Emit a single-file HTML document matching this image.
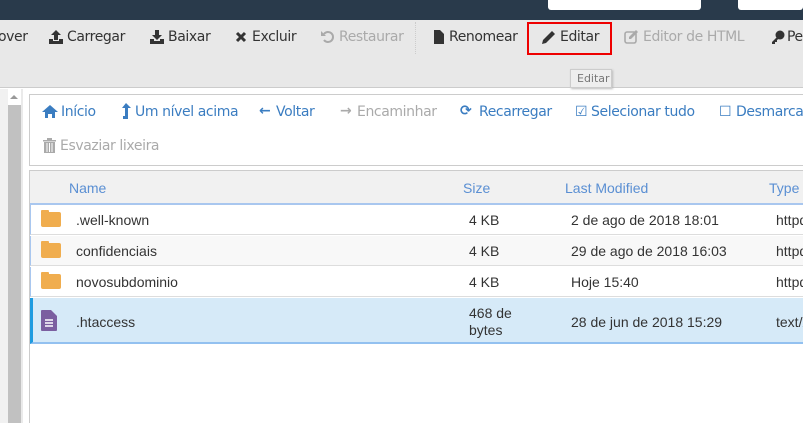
<!DOCTYPE html><html><head><style>
*{margin:0;padding:0;box-sizing:border-box}
body{width:803px;height:423px;overflow:hidden;background:#fff;font-family:"Liberation Sans",sans-serif;position:relative}
.a{position:absolute;white-space:nowrap}
.tb{font-family:"DejaVu Sans","Liberation Sans",sans-serif;font-size:14px;color:#333;letter-spacing:-0.4px}
.nv{font-family:"DejaVu Sans","Liberation Sans",sans-serif;font-size:14px;color:#3b7dc1;letter-spacing:-0.4px}
.g{color:#aaa}
.r{font-size:14px;color:#333}
.h{font-size:14px;color:#5a8fd3}
svg.a{overflow:visible}
</style></head><body>
<div class="a" style="left:0;top:0;width:803px;height:20px;background:#293a4b"></div>
<div class="a" style="left:548px;top:0;width:153px;height:10px;background:#fff;border-radius:0 0 3px 3px"></div>
<div class="a" style="left:738px;top:0;width:65px;height:10px;background:#fff;border-radius:0 0 3px 3px"></div>
<div class="a" style="left:0;top:20px;width:803px;height:68px;background:#e8e8e8;border-bottom:1px solid #ccc"></div>
<div class="a" style="left:415px;top:22px;height:32px;border-left:1px dotted #ccc"></div>
<div class="a tb" style="left:-2px;top:29px">over</div>
<svg class="a" style="left:49px;top:30px" width="14" height="14"><path d="M7 0L12 5H9V10H5V5H2Z M0 9H4V11H10V9H14V14H0Z" fill="#333"/></svg>
<div class="a tb" style="left:67px;top:29px">Carregar</div>
<svg class="a" style="left:150px;top:30px" width="14" height="14"><path d="M5 0H9V5H12L7 10L2 5H5Z M0 9H4V11H10V9H14V14H0Z" fill="#333"/></svg>
<div class="a tb" style="left:168px;top:29px">Baixar</div>
<svg class="a" style="left:236px;top:32px" width="10" height="10"><path d="M1 1L9 9M9 1L1 9" stroke="#333" stroke-width="3"/></svg>
<div class="a tb" style="left:252px;top:29px">Excluir</div>
<svg class="a" style="left:321px;top:30px" width="13" height="13"><path d="M3 4A5 5 0 1 1 3 10" stroke="#aaa" stroke-width="2" fill="none"/><path d="M0 1V6H5Z" fill="#aaa"/></svg>
<div class="a tb g" style="left:339px;top:29px">Restaurar</div>
<svg class="a" style="left:434px;top:30px" width="10" height="14"><path d="M0 0H6L10 4V14H0Z" fill="#333"/></svg>
<div class="a tb" style="left:449px;top:29px">Renomear</div>
<div class="a" style="left:527px;top:22px;width:85px;height:33px;border:2px solid #e00"></div>
<svg class="a" style="left:542px;top:30px" width="14" height="14"><path d="M10 1L13 4L4 13L0 14L1 10Z" fill="#333"/></svg>
<div class="a tb" style="left:560px;top:29px">Editar</div>
<svg class="a" style="left:624px;top:30px" width="15" height="14"><rect x="1" y="2" width="11" height="11" rx="2" fill="none" stroke="#aaa" stroke-width="1.6"/><path d="M12 0L14 2L7 9L5 9L5 7Z" fill="#aaa"/></svg>
<div class="a tb g" style="left:643px;top:29px">Editor de HTML</div>
<svg class="a" style="left:771px;top:30px" width="14" height="14"><circle cx="9" cy="5" r="4.5" fill="#333"/><path d="M7 6L1 12V14H4V12H6V10L9 8Z" fill="#333"/></svg>
<div class="a tb" style="left:787px;top:29px">Pe</div>
<div class="a" style="left:570px;top:69px;width:42px;height:19px;background:#eee;border:1px solid #ccc;box-shadow:1px 1px 2px #bbb;font-size:11px;color:#777;padding:2px 0 0 6px;font-family:'DejaVu Sans',sans-serif">Editar</div>
<div class="a" style="left:0;top:89px;width:8px;height:334px;background:#f1f1f1"></div>
<div class="a" style="left:8px;top:105px;width:13px;height:318px;background:#c1c1c1"></div>
<div class="a" style="left:10px;top:95px;width:0;height:0;border:4px solid transparent;border-bottom:4px solid #999;border-top:0"></div>
<div class="a" style="left:21px;top:89px;width:2px;height:334px;background:#eaeaea"></div>
<div class="a" style="left:29px;top:94px;width:780px;height:72px;border:1px solid #ccc"></div>
<svg class="a" style="left:42px;top:105px" width="16" height="13"><path d="M8 0L16 7H13V13H10V9H6V13H3V7H0Z" fill="#3b7dc1"/></svg>
<div class="a nv" style="left:61px;top:104px">Início</div>
<svg class="a" style="left:121px;top:103px" width="10" height="16"><path d="M5 0L10 5H7V16H2V13H4V5H1Z" fill="#3b7dc1"/></svg>
<div class="a nv" style="left:135px;top:104px">Um nível acima</div>
<div class="a nv" style="left:259px;top:103px;font-weight:bold">←</div>
<div class="a nv" style="left:276px;top:104px">Voltar</div>
<div class="a nv g" style="left:340px;top:103px;font-weight:bold">→</div>
<div class="a nv g" style="left:357px;top:104px">Encaminhar</div>
<div class="a nv" style="left:460px;top:103px;font-weight:bold">⟳</div>
<div class="a nv" style="left:479px;top:104px">Recarregar</div>
<div class="a nv" style="left:575px;top:104px">☑</div>
<div class="a nv" style="left:591px;top:104px">Selecionar tudo</div>
<div class="a nv" style="left:719px;top:104px">☐</div>
<div class="a nv" style="left:736px;top:104px">Desmarcar</div>
<svg class="a" style="left:43px;top:138px" width="13" height="15"><path d="M0 2H13V3.5H0Z M4 0H9V2H4Z M1 4H12V15H1Z" fill="#aaa"/><path d="M4 5V14M6.5 5V14M9 5V14" stroke="#fff" stroke-width="1"/></svg>
<div class="a nv g" style="left:60px;top:138px">Esvaziar lixeira</div>
<div class="a" style="left:29px;top:170px;width:780px;height:253px;border-left:1px solid #ccc;border-top:1px solid #ccc"></div>
<div class="a" style="left:30px;top:171px;width:773px;height:34px;background:#f1f1f1;border-bottom:2px solid #a9c7ef"></div>
<div class="a h" style="left:69px;top:180px">Name</div>
<div class="a h" style="left:463px;top:180px">Size</div>
<div class="a h" style="left:565px;top:180px">Last Modified</div>
<div class="a h" style="left:769px;top:180px">Type</div>
<div class="a" style="left:30px;top:205px;width:773px;height:30px;background:#fff;border-bottom:1px solid #ddd;border-left:1px solid #a9c7ef"></div>
<div class="a" style="left:30px;top:236px;width:773px;height:30px;background:#f8f8f8;border-bottom:1px solid #ddd;border-left:1px solid #a9c7ef"></div>
<div class="a" style="left:30px;top:267px;width:773px;height:30px;background:#fff;border-bottom:1px solid #ddd;border-left:1px solid #a9c7ef"></div>
<div class="a" style="left:30px;top:298px;width:773px;height:46px;background:#d6eaf8;border-bottom:2px solid #93c1f0;border-left:3px solid #1e9be0"></div>
<div class="a" style="left:41px;top:212px;width:20px;height:15px;background:#f0ad4e;border-radius:2px"></div><div class="a" style="left:41px;top:210px;width:8px;height:4px;background:#f0ad4e;border-radius:1px"></div>
<div class="a" style="left:41px;top:243px;width:20px;height:15px;background:#f0ad4e;border-radius:2px"></div><div class="a" style="left:41px;top:241px;width:8px;height:4px;background:#f0ad4e;border-radius:1px"></div>
<div class="a" style="left:41px;top:274px;width:20px;height:15px;background:#f0ad4e;border-radius:2px"></div><div class="a" style="left:41px;top:272px;width:8px;height:4px;background:#f0ad4e;border-radius:1px"></div>
<svg class="a" style="left:41px;top:310px" width="16" height="21"><path d="M0 1Q0 0 1 0H10L16 6V20Q16 21 15 21H1Q0 21 0 20Z" fill="#7b5fa0"/><path d="M4 10h8M4 13h8M4 16h8" stroke="#fff" stroke-width="1.5"/></svg>
<div class="a r" style="left:76px;top:212px">.well-known</div>
<div class="a r" style="left:76px;top:243px">confidenciais</div>
<div class="a r" style="left:76px;top:274px">novosubdominio</div>
<div class="a r" style="left:76px;top:314px">.htaccess</div>
<div class="a r" style="left:469px;top:212px">4 KB</div>
<div class="a r" style="left:469px;top:243px">4 KB</div>
<div class="a r" style="left:469px;top:274px">4 KB</div>
<div class="a r" style="left:469px;top:305px;line-height:17px">468 de<br>bytes</div>
<div class="a r" style="left:571px;top:212px">2 de ago de 2018 18:01</div>
<div class="a r" style="left:571px;top:243px">29 de ago de 2018 16:03</div>
<div class="a r" style="left:571px;top:274px">Hoje 15:40</div>
<div class="a r" style="left:571px;top:314px">28 de jun de 2018 15:29</div>
<div class="a r" style="left:776px;top:212px">httpd</div>
<div class="a r" style="left:776px;top:243px">httpd</div>
<div class="a r" style="left:776px;top:274px">httpd</div>
<div class="a r" style="left:776px;top:314px">text/x</div>
</body></html>
